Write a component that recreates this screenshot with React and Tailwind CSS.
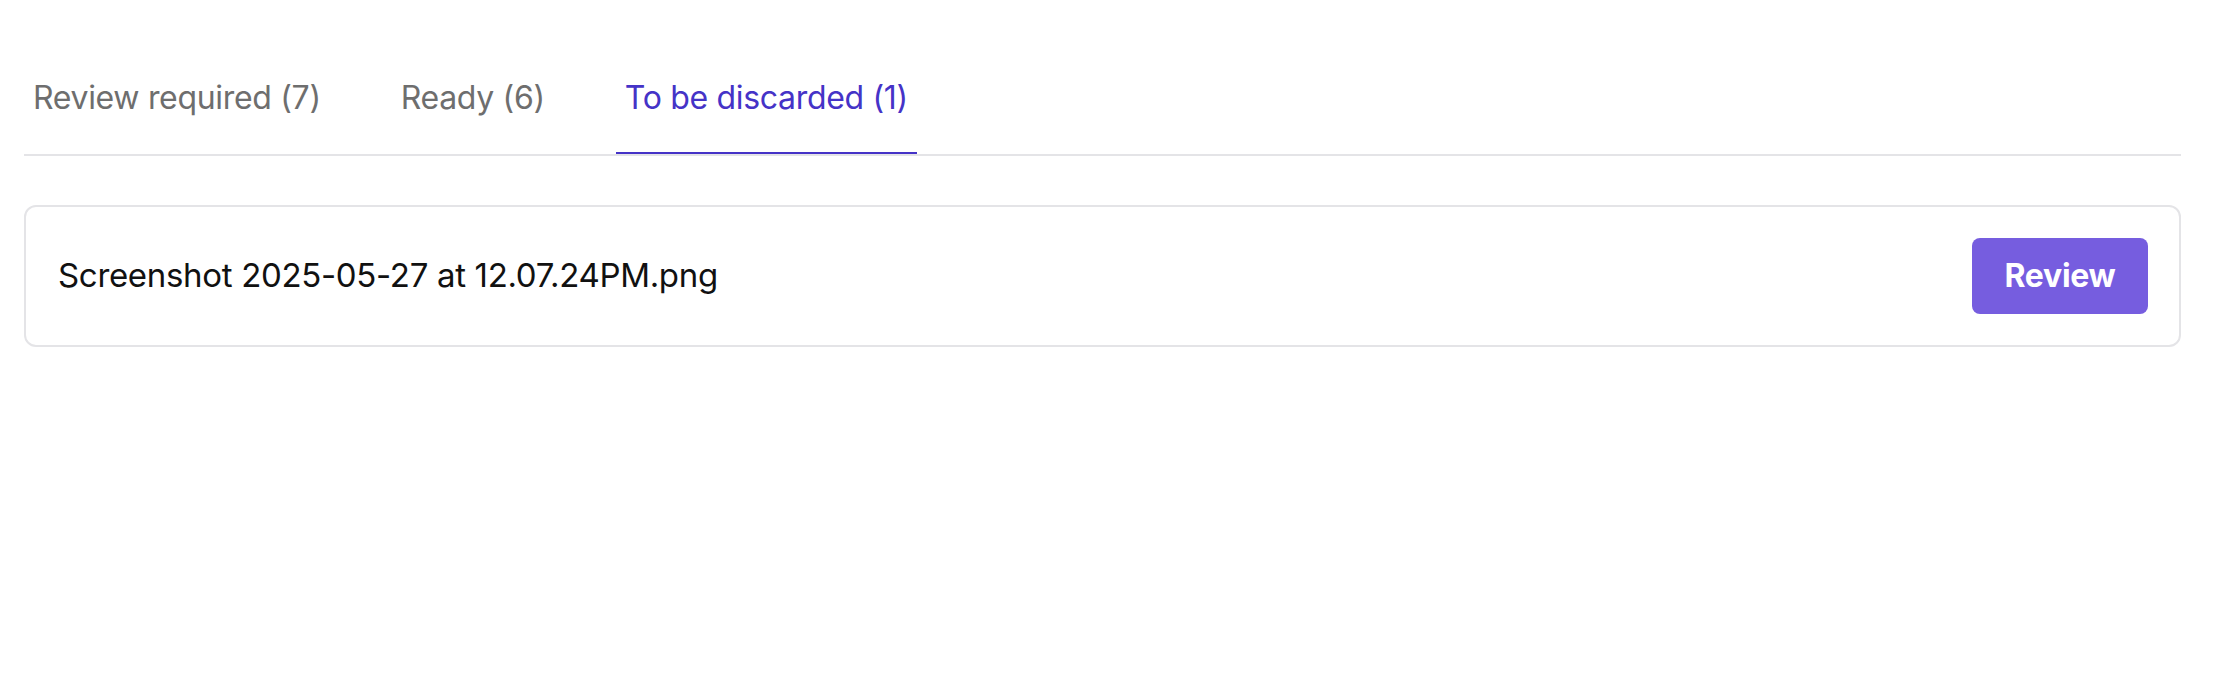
import React, { useState } from 'react';

const tabs = [
  { key: 'review', label: 'Review required (7)' },
  { key: 'ready', label: 'Ready (6)' },
  { key: 'discard', label: 'To be discarded (1)' },
];

const files = ['Screenshot 2025-05-27 at 12.07.24PM.png'];

export default function App() {
  const [active, setActive] = useState('discard');

  return (
    <div className="min-h-[700px] bg-white pl-[24px] pr-[47px] pt-[78px] font-['Inter','Noto_Sans',sans-serif] tracking-[-0.02em]">
      <div className="flex gap-[62px] border-b-2 border-[#e4e4e7]">
        {tabs.map(tab => (
          <button
            key={tab.key}
            onClick={() => setActive(tab.key)}
            className={`px-[9px] pb-[34px] text-[32px] leading-[40px] border-b-2 ${
              active === tab.key
                ? 'border-[#4533c7] text-[#4533c7]'
                : 'border-transparent text-[#6e6e6e]'
            }`}
          >
            {tab.label}
          </button>
        ))}
      </div>

      <div className="mt-[49px] flex flex-col gap-4">
        {files.map(name => (
          <div
            key={name}
            className="flex h-[142px] items-center justify-between rounded-[12px] border-2 border-[#e4e4e7] pl-[32px] pr-[31px]"
          >
            <span className="text-[33px] text-[#111111]">{name}</span>
            <button className="h-[76px] w-[176px] rounded-[8px] bg-[#765ddf] text-[32px] font-bold text-white">
              Review
            </button>
          </div>
        ))}
      </div>
    </div>
  );
}
